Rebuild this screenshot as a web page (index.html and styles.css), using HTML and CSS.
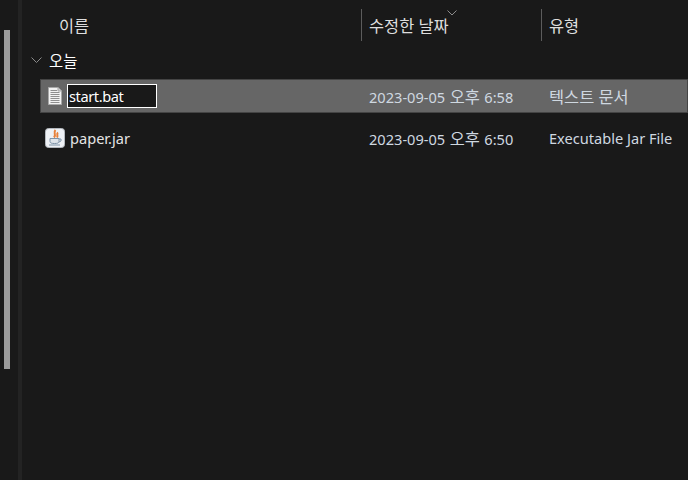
FILE: index.html
```html
<!DOCTYPE html>
<html lang="ko">
<head>
    <title>파일 탐색기</title>
    <link rel="stylesheet" href="styles.css">
</head>
<body>
    <div class="explorer">
        <div class="nav-pane">
            <div class="scroll-thumb"></div>
        </div>
        <div class="divider"></div>
        <div class="file-pane">
            <div class="columns">
                <div class="col col-name ko">이름</div>
                <div class="col col-date">
                    <span class="ko">수정한 날짜</span>
                    <svg class="sort-arrow" width="10" height="6" viewBox="0 0 10 6"><path d="M0.5 0.5 L5 5 L9.5 0.5" fill="none" stroke="#8c8c8c" stroke-width="1"/></svg>
                </div>
                <div class="col col-type ko">유형</div>
            </div>
            <div class="group">
                <svg class="group-arrow" width="11" height="7" viewBox="0 0 11 7"><path d="M0.5 0.5 L5.5 5.5 L10.5 0.5" fill="none" stroke="#8a8a8a" stroke-width="1"/></svg>
                <span class="group-label">오늘</span>
            </div>
            <div class="row selected">
                <div class="cell cell-name">
                    <svg class="icon-doc" width="14" height="18" viewBox="0 0 14 18">
                        <path d="M0.5 0.5 H10 L13.5 4 V17.5 H0.5 Z" fill="#f2f2f2" stroke="#a8a8a8"/>
                        <path d="M10 0.5 V4 H13.5" fill="#cfcfcf" stroke="#a8a8a8"/>
                        <path d="M2.5 3.5 H9 M2.5 5.5 H11.5 M2.5 7.5 H11.5 M2.5 9.5 H11.5 M2.5 11.5 H11.5 M2.5 13.5 H11.5 M2.5 15.5 H11.5" stroke="#8f8f8f" stroke-width="1"/>
                    </svg>
                    <input class="rename" type="text" value="start.bat">
                </div>
                <div class="cell cell-date">2023-09-05 <span class="ko">오후</span> 6:58</div>
                <div class="cell cell-type ko">텍스트 문서</div>
            </div>
            <div class="row">
                <div class="cell cell-name">
                    <svg class="icon-jar" width="20" height="20" viewBox="0 0 20 20">
                        <rect x="0.5" y="0.5" width="19" height="19" rx="3" fill="#eef1f5" stroke="#b4b9bf"/>
                        <path d="M10.5 2 C7.5 5 12 6 9 9.5 M13 4.5 C11 6 13.5 7 12 9.5" fill="none" stroke="#e8813a" stroke-width="2"/>
                        <path d="M5 10.5 H14 V13.5 C14 15 12.5 15.5 9.5 15.5 C6.5 15.5 5 15 5 13.5 Z" fill="#dfe5eb" stroke="#7d93a8"/>
                        <path d="M14 11 H16 V13 L14 14" fill="none" stroke="#7d93a8"/>
                        <path d="M4 17 H15" stroke="#7d93a8"/>
                    </svg>
                    <span class="file-name">paper.jar</span>
                </div>
                <div class="cell cell-date">2023-09-05 <span class="ko">오후</span> 6:50</div>
                <div class="cell cell-type">Executable Jar File</div>
            </div>
        </div>
    </div>
</body>
</html>
```

FILE: styles.css
```css
html, body {
    margin: 0;
    height: 100%;
    overflow: hidden;
}
body {
    background-color: #191919;
    color: #dcdcdc;
    font-family: "Noto Sans", "Noto Sans CJK KR", sans-serif;
    font-size: 14.6px;
}
.ko {
    font-size: 16.4px;
}
.explorer {
    display: flex;
    height: 480px;
}
.nav-pane {
    width: 18px;
    padding: 30px 0 0 4px;
    box-sizing: border-box;
}
.scroll-thumb {
    width: 6px;
    height: 339px;
    background-color: #9b9b9b;
}
.divider {
    width: 4px;
    background-color: #232323;
}
.file-pane {
    flex: 1;
    min-width: 0;
}
.columns {
    display: flex;
    height: 32px;
    margin-top: 9px;
}
.col {
    box-sizing: border-box;
    line-height: 33px;
    color: #dedede;
    position: relative;
}
.col-name {
    width: 339px;
    padding-left: 37px;
}
.col-date {
    width: 180px;
    border-left: 1px solid #5c5c5c;
    padding-left: 7px;
}
.col-type {
    flex: 1;
    border-left: 1px solid #5c5c5c;
    padding-left: 7px;
}
.sort-arrow {
    position: absolute;
    left: 85px;
    top: 1px;
}
.group {
    display: flex;
    align-items: center;
    height: 38px;
    padding-left: 9px;
    color: #ffffff;
}
.group-arrow {
    margin-right: 7px;
}
.group-label {
    font-size: 15.4px;
    padding-top: 1px;
}
.row {
    display: flex;
    height: 34px;
    margin-left: 18px;
    margin-bottom: 8px;
    align-items: center;
    box-sizing: border-box;
}
.row.selected {
    background-color: #666666;
    border: 1px solid #444444;
}
.selected .cell-name {
    width: 328px;
    padding-left: 4px;
}
.cell-name {
    width: 329px;
    display: flex;
    align-items: center;
    padding-left: 5px;
    box-sizing: border-box;
}
.cell-date {
    width: 180px;
    color: #cfd8e0;
    word-spacing: 0.7px;
}
.cell-type {
    flex: 1;
    white-space: nowrap;
    color: #cfd8e0;
}
.icon-doc {
    margin: 0 5px 0 3px;
}
.icon-jar {
    margin-right: 5px;
}
.file-name {
    color: #e4e4e4;
}
.rename {
    width: 90px;
    height: 24px;
    box-sizing: border-box;
    background-color: #191919;
    color: #ffffff;
    border: 1px solid #ffffff;
    padding: 0 1px;
    font: inherit;
    letter-spacing: -0.4px;
    outline: none;
}
```
